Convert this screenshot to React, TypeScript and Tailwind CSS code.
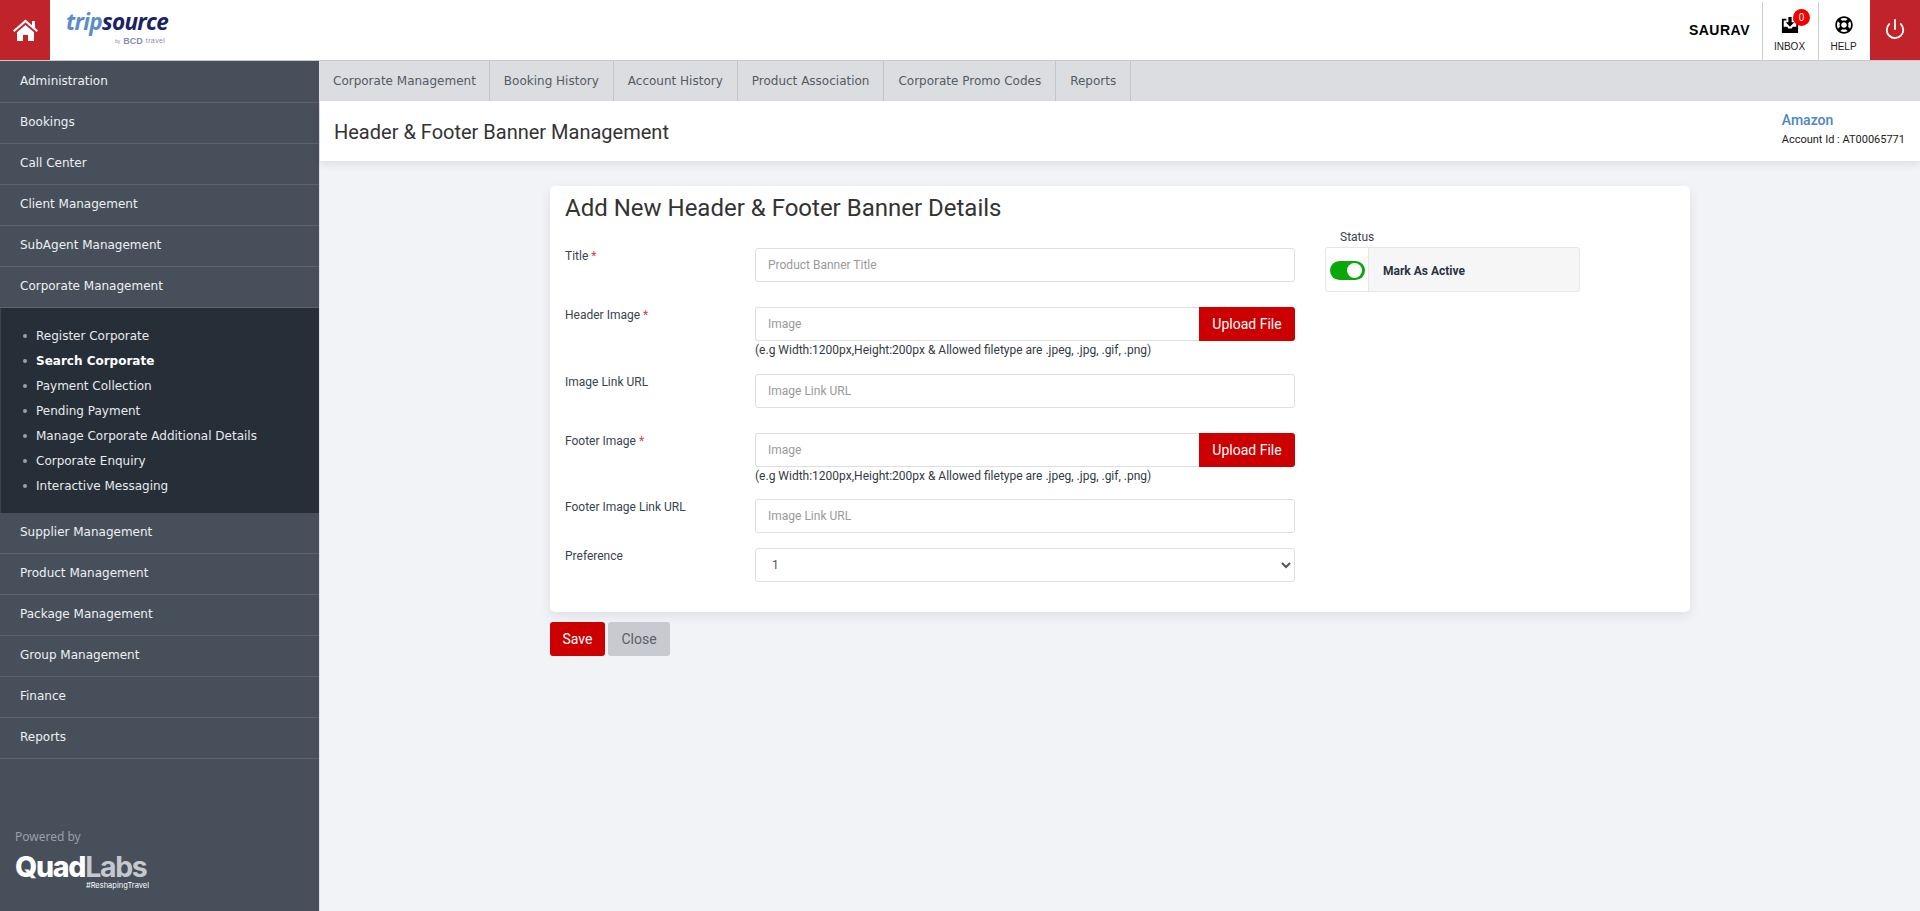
import React from "react";
import { Power } from "lucide-react";
import { FaRegLifeRing } from "react-icons/fa";

const roboto = "font-['Roboto',sans-serif]";
const tabFont = "font-['DejaVu_Sans',sans-serif]";

const menuTop = ["Administration", "Bookings", "Call Center", "Client Management", "SubAgent Management", "Corporate Management"];
const menuBottom = ["Supplier Management", "Product Management", "Package Management", "Group Management", "Finance", "Reports"];
const sub = ["Register Corporate", "Search Corporate", "Payment Collection", "Pending Payment", "Manage Corporate Additional Details", "Corporate Enquiry", "Interactive Messaging"];
const tabs = ["Corporate Management", "Booking History", "Account History", "Product Association", "Corporate Promo Codes", "Reports"];

function MenuItem({ label }: { label: string }) {
  return (
    <div className="h-[41px] flex items-center pl-5 pb-[2px] border-b border-[#5b636e] text-[12px] text-[#eef0f2]">
      {label}
    </div>
  );
}

function Label({ text, req }: { text: string; req?: boolean }) {
  return (
    <div className="w-[190px] shrink-0 -mt-[1px] text-[12px] leading-[18px] text-[#3a4450]">
      {text}
      {req && <span className="text-[#d9414f]"> *</span>}
    </div>
  );
}

function TextInput({ placeholder }: { placeholder: string }) {
  return (
    <input
      readOnly
      placeholder={placeholder}
      className="w-[540px] h-[34px] px-3 border border-[#dedfe2] rounded-[3px] bg-white text-[12px] placeholder:text-[#9a9a9a] outline-none"
    />
  );
}

function UploadInput() {
  return (
    <div className="w-[540px]">
      <div className="flex h-[34px]">
        <input
          readOnly
          placeholder="Image"
          className="flex-1 min-w-0 px-3 border border-r-0 border-[#dedfe2] rounded-l-[3px] bg-white text-[12px] placeholder:text-[#9a9a9a] outline-none"
        />
        <div className="w-[96px] flex items-center justify-center bg-[#cc0000] rounded-r-[3px] text-white text-[14px]">Upload File</div>
      </div>
      <div className="text-[12px] leading-[18px] text-[#333b45] whitespace-nowrap">
        (e.g Width:1200px,Height:200px &amp; Allowed filetype are .jpeg, .jpg, .gif, .png)
      </div>
    </div>
  );
}

function HomeIcon() {
  return (
    <svg width="25" height="22" viewBox="0 0 25 22" fill="#fff">
      <path d="M12.5 0.5 19 6.2V2h3v6.8l3 2.7-1.4 1.5L12.5 3.4 1.4 13 0 11.5z" />
      <path d="M4 13.2 12.5 6 21 13.2V22h-6v-6h-5v6H4z" />
    </svg>
  );
}

function InboxIcon() {
  return (
    <svg width="18" height="18" viewBox="0 0 20 20" fill="#000">
      <path d="M1 3h5v2H3v7h4l1 2h4l1-2h4V5h-3V3h5v16H1z" />
      <path d="M8.2 1h3.6v6h3l-4.8 5-4.8-5h3z" />
    </svg>
  );
}

export default function App() {
  return (
    <div className={`h-screen flex flex-col overflow-hidden bg-[#f1f3f7] ${roboto}`}>
      <header className="h-[61px] shrink-0 flex items-stretch bg-white border-b border-[#c9c9c9]">
        <div className="w-[50px] flex items-center justify-center bg-[#c1232a]">
          <HomeIcon />
        </div>
        <div className="ml-[16px] w-[112px] flex flex-col pt-[8px]">
          <div className="font-['Open_Sans',sans-serif] italic font-bold text-[22.5px] leading-[28px] tracking-[-0.7px] whitespace-nowrap">
            <span className="text-[#5b8ec9]">trip</span>
            <span className="text-[#1b2263]">source</span>
          </div>
          <div className="ml-[49px] flex items-center gap-[3px] text-[#8a8db0] leading-[10px] whitespace-nowrap font-['Liberation_Sans',sans-serif]">
            <span className="text-[5px]">by</span>
            <span className="text-[9px] font-bold">BCD</span>
            <span className="text-[7px] tracking-[0.4px]">travel</span>
          </div>
        </div>
        <div className="ml-auto flex items-stretch">
          <div className="mr-[12px] self-center font-['Liberation_Sans',sans-serif] font-bold text-[14px] text-black tracking-[0.5px] mt-[1px]">SAURAV</div>
          <div className="w-[56px] mt-[2px] border-l border-[#cfcfcf] flex flex-col items-center relative font-['Liberation_Sans',sans-serif]">
            <div className="mt-[14px] h-[18px] -ml-[2px]"><InboxIcon /></div>
            <span className="absolute top-[7px] left-[30px] w-[17px] h-[17px] rounded-full bg-[#f00000] text-white text-[10px] leading-[17px] text-center">0</span>
            <span className="mt-[7px] -ml-[2px] text-[10px] leading-[11px] text-[#222]">INBOX</span>
          </div>
          <div className="w-[52px] mt-[2px] border-l border-[#cfcfcf] flex flex-col items-center font-['Liberation_Sans',sans-serif]">
            <FaRegLifeRing className="mt-[14px] -ml-[2px] text-[18px] text-black" />
            <span className="mt-[7px] -ml-[2px] text-[10px] leading-[11px] text-[#222]">HELP</span>
          </div>
          <div className="w-[50px] bg-[#c1232a] flex items-center justify-center">
            <Power className="text-white w-[22px] h-[22px] -mt-[2px]" strokeWidth={2} />
          </div>
        </div>
      </header>

      <div className="flex-1 flex min-h-0">
        <aside className={`w-[320px] shrink-0 flex flex-col pt-[1px] bg-[#474f5b] border-r border-[#e0e1e5] ${tabFont}`}>
          {menuTop.map((m) => <MenuItem key={m} label={m} />)}
          <ul className="h-[205px] pt-[15px] pl-[22px] bg-[#262e38] border-l border-[#3a424d]">
            {sub.map((s, i) => (
              <li key={s} className="h-[25px] flex items-center text-[12px] text-[#e8eaec]">
                <span className="w-[4px] h-[4px] rounded-full bg-[#9aa0a8] mr-[9px]" />
                <span className={i === 1 ? "font-bold text-white" : ""}>{s}</span>
              </li>
            ))}
          </ul>
          {menuBottom.map((m) => <MenuItem key={m} label={m} />)}
          <div className="mt-auto pl-[15px] pb-[21px]">
            <div className="font-['Noto_Sans',sans-serif] text-[12px] leading-[16px] text-[#98a0a9]">Powered by</div>
            <div className="mt-[8px] w-[134px] font-['Inter',sans-serif] font-extrabold text-[28.5px] leading-[28px] tracking-[-1.3px] whitespace-nowrap">
              <span className="text-white">Quad</span>
              <span className="text-[#c5c9ce] font-bold">Labs</span>
            </div>
            <div className="w-[134px] text-right font-['Inter',sans-serif] text-[7.5px] leading-[9px] text-white whitespace-nowrap">#ReshapingTravel</div>
          </div>
        </aside>

        <main className="flex-1 min-w-0 flex flex-col">
          <nav className={`h-[40px] shrink-0 flex bg-[#dcdde1] ${tabFont}`}>
            {tabs.map((t) => (
              <div key={t} className="px-[14px] first:px-[13px] flex items-center border-r border-[#c3c4c8] text-[12px] text-[#555b64] whitespace-nowrap">{t}</div>
            ))}
          </nav>
          <div className="h-[60px] shrink-0 flex justify-between bg-white shadow-[0_4px_8px_rgba(0,0,0,0.08)] pl-[14px] pr-[15px]">
            <h1 className="self-center mt-[2px] text-[20px] text-[#333]">Header &amp; Footer Banner Management</h1>
            <div className="pt-[9px]">
              <div className="text-[14px] leading-[20px] font-medium text-[#4a86c8]">Amazon</div>
              <div className="text-[11px] leading-[20px] text-[#222]">Account Id : AT00065771</div>
            </div>
          </div>

          <div className="ml-[230px] mt-[25px] w-[1140px]">
            <section className="h-[426px] bg-white rounded-[5px] shadow-[0_4px_12px_rgba(0,0,0,0.08)] px-[15px] pt-[7px]">
              <h2 className="text-[24px] leading-[30px] text-[#333]">Add New Header &amp; Footer Banner Details</h2>
              <div className="flex mt-[24px]">
                <div className="w-[730px] shrink-0 pt-[1px]">
                  <div className="flex mb-[25px]"><Label text="Title" req /><TextInput placeholder="Product Banner Title" /></div>
                  <div className="flex mb-[15px]"><Label text="Header Image" req /><UploadInput /></div>
                  <div className="flex mb-[25px]"><Label text="Image Link URL" /><TextInput placeholder="Image Link URL" /></div>
                  <div className="flex mb-[14px]"><Label text="Footer Image" req /><UploadInput /></div>
                  <div className="flex mb-[15px]"><Label text="Footer Image Link URL" /><TextInput placeholder="Image Link URL" /></div>
                  <div className="flex">
                    <Label text="Preference" />
                    <select className="w-[540px] h-[34px] px-3 border border-[#dedfe2] rounded-[3px] bg-white text-[12px] text-[#555] outline-none">
                      <option>1</option>
                    </select>
                  </div>
                </div>
                <div className="w-[255px] -mt-[19px] ml-[30px]">
                  <div className="pl-[15px] text-[12px] leading-[18px] text-[#3a4450]">Status</div>
                  <div className="mt-[1px] h-[45px] flex border border-[#e6e6e6] rounded-[3px] bg-[#f6f6f6]">
                    <div className="w-[43px] bg-white border-r border-[#e6e6e6] flex items-center justify-center rounded-l-[3px]">
                      <div className="w-[35px] h-[19px] mt-[2px] rounded-full bg-[#0aa70a] flex items-center justify-end pr-[3px]">
                        <span className="w-[15px] h-[15px] rounded-full bg-white" />
                      </div>
                    </div>
                    <div className="pl-[14px] self-center mt-[2px] text-[12px] font-bold text-[#2b333d]">Mark As Active</div>
                  </div>
                </div>
              </div>
            </section>
            <div className="flex gap-[3px] mt-[10px]">
              <div className="w-[55px] h-[34px] flex items-center justify-center bg-[#cc0000] rounded-[3px] text-white text-[14px]">Save</div>
              <div className="w-[62px] h-[34px] flex items-center justify-center bg-[#c9cacf] rounded-[3px] text-[#5b5f66] text-[14px]">Close</div>
            </div>
          </div>
        </main>
      </div>
    </div>
  );
}
